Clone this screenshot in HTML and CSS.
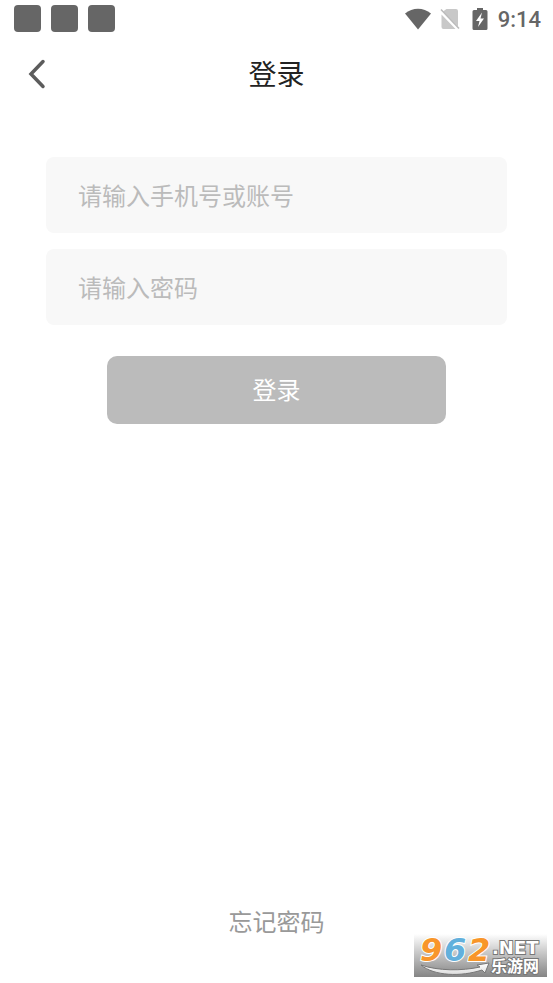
FILE: index.html
```html
<!DOCTYPE html>
<html lang="zh-CN">
<head>
<meta charset="utf-8">
<meta name="viewport" content="width=device-width, initial-scale=1">
<title>登录</title>
<link rel="stylesheet" href="styles.css">
</head>
<body>
<div class="screen">
  <div class="status">
    <div class="notices"><span class="notice"></span><span class="notice"></span><span class="notice"></span></div>
    <div class="system">
      <svg class="wifi" width="28" height="22" viewBox="0 0 28 22" aria-hidden="true"><path d="M1 5.500C8.500-.8 19.500-.8 27 5.500L14 21.500Z" fill="#666"/></svg>
      <svg class="sim" width="20" height="22" viewBox="0 0 20 22" aria-hidden="true"><path d="M6.500 1H16q2 0 2 2v15.500L3 3.500ZM1.500 6.500 15.500 21H3.500q-2 0-2-2Z" fill="#c8c8c8"/><path d="M1 1.500 19 20.500" stroke="#bbb" stroke-width="1.500"/></svg>
      <svg class="battery" width="16" height="22" viewBox="0 0 16 22" aria-hidden="true"><path d="M5 0h6v2h3q1.500 0 1.500 1.500v17Q15.500 22 14 22H2Q.5 22 .5 20.500v-17Q.5 2 2 2h3Z" fill="#666"/><path d="M10 4.500 4 13h3.500L6 19l6-8.500H8.500Z" fill="#fff"/></svg>
      <span class="clock">9:14</span>
    </div>
  </div>
  <header class="header">
    <button class="back" type="button" aria-label="返回"><svg width="18" height="30" viewBox="0 0 18 30" aria-hidden="true"><path d="M15 2.500 3 15 15 27.500" fill="none" stroke="#5c5c5c" stroke-width="3.500" stroke-linecap="round" stroke-linejoin="miter"/></svg></button>
    <h1 class="title">登录</h1>
  </header>
  <form class="form">
    <input class="field" type="text" aria-label="手机号或账号" placeholder="请输入手机号或账号">
    <input class="field" type="password" aria-label="密码" placeholder="请输入密码">
    <button class="submit" type="button">登录</button>
  </form>
  <footer class="footer"><a class="forgot" href="#">忘记密码</a></footer>
  <div class="watermark">
    <svg width="133" height="43" viewBox="0 0 133 43">
      <defs>
        <linearGradient id="swoosh" x1="0" x2="0" y1="0" y2="1"><stop offset="0" stop-color="#fff"/><stop offset="1" stop-color="#ddd"/></linearGradient>
      </defs>
      <path d="M7 31C24 37 48 37 66 33L63 31 75 29 71 39 68 36C47 43 20 42 7 31Z" fill="url(#swoosh)" stroke="#777" stroke-width="1"/>
      <g class="digits">
        <text x="6" y="27" fill="#f8962a">9</text>
        <text x="30" y="27" fill="#62b0dc">6</text>
        <text x="54" y="27" fill="#f8962a">2</text>
      </g>
      <text class="net" x="78" y="20">.NET</text>
      <text class="site" x="77" y="38">乐游网</text>
    </svg>
  </div>
</div>
</body>
</html>
```
FILE: styles.css
```css
* { box-sizing: border-box; }

body {
  margin: 0;
  background: #fff;
  font-family: Roboto, "Noto Sans CJK SC", sans-serif;
}

button, input { font: inherit; border: 0; }

.screen {
  position: relative;
  display: flex;
  flex-direction: column;
  min-height: 100vh;
}

.status {
  display: flex;
  justify-content: space-between;
  align-items: center;
  height: 37px;
  padding: 0 12px 0 14px;
}

.notices { display: flex; gap: 10px; }

.notice {
  width: 27px;
  height: 27px;
  border-radius: 4px;
  background: #666;
}

.system { display: flex; align-items: center; gap: 10px; }

.sim { margin-left: -2px; margin-right: 2px; }

.clock {
  color: #666;
  font-size: 22px;
  font-weight: 500;
  line-height: 28px;
  padding-top: 2px;
}

.header {
  display: grid;
  grid-template-columns: 48px 1fr 48px;
  align-items: center;
  height: 74px;
}

.back {
  display: flex;
  justify-content: flex-end;
  padding: 0 2px 0 0;
  background: none;
}

.title {
  grid-column: 2;
  margin: 0;
  padding-top: 4px;
  color: #222;
  font-size: 28px;
  font-weight: 400;
  line-height: 40px;
  text-align: center;
}

.form {
  display: flex;
  flex-direction: column;
  gap: 16px;
  padding: 46px 46px 0;
}

.field {
  width: 100%;
  height: 76px;
  padding: 4px 32px 0;
  border-radius: 8px;
  background: #f8f8f8;
  color: #333;
  font-size: 24px;
}

.field::placeholder { color: #bbb; opacity: 1; }

.submit {
  align-self: center;
  width: 73.400%;
  height: 68px;
  margin-top: 15px;
  padding: 0 0 4px;
  border-radius: 10px;
  background: #bbb;
  color: #fff;
  font-size: 24px;
}

.footer {
  margin-top: auto;
  padding-bottom: 42px;
  text-align: center;
}

.forgot {
  color: #999;
  font-size: 24px;
  line-height: 36px;
  text-decoration: none;
}

.watermark {
  position: absolute;
  right: 6px;
  bottom: 6px;
  width: 133px;
  height: 43px;
  background: linear-gradient(#fff, #ccc 40%, #858585);
}

.watermark svg { display: block; overflow: visible; }

.digits text {
  font: italic bold 32px "DejaVu Sans", sans-serif;
  stroke: #fff;
  stroke-width: 2px;
  paint-order: stroke;
}

.net, .site {
  fill: #fff;
  stroke: #777;
  stroke-width: 2px;
  paint-order: stroke;
}

.net { font: bold 18px "DejaVu Sans", sans-serif; }

.site { font: bold 16px "Noto Sans CJK SC", sans-serif; }
```
